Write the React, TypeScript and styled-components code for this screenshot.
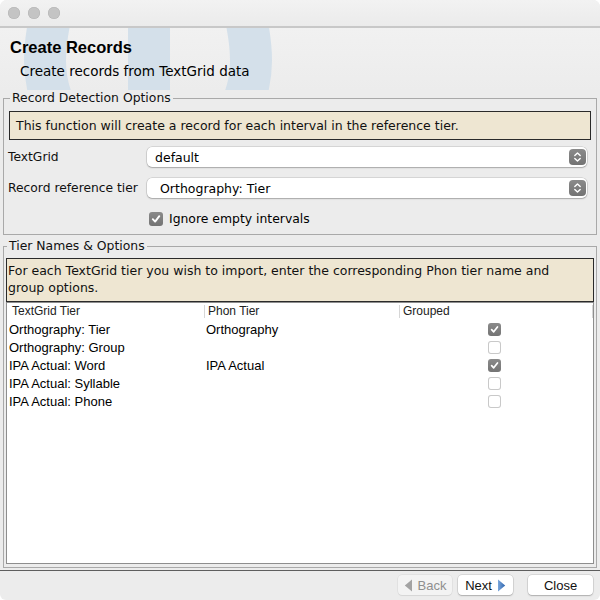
import React from "react";
import styled, { createGlobalStyle } from "styled-components";

const UI = `"DejaVu Sans", Verdana, sans-serif`;
const SANS = `"Liberation Sans", Arial, sans-serif`;

const GlobalStyle = createGlobalStyle`
  html, body { margin: 0; padding: 0; background: #ffffff; }
  body { font-family: ${UI}; color: #000; }
  * { box-sizing: border-box; }
`;

const Window = styled.div`
  width: 600px;
  height: 600px;
  border-radius: 7px 7px 6px 6px;
  overflow: hidden;
  background: #ececec;
  display: flex;
  flex-direction: column;
`;

const TitleBar = styled.div`
  height: 28px;
  flex: none;
  display: flex;
  align-items: center;
  gap: 8px;
  padding: 0 0 1px 8px;
  background: linear-gradient(#f2f2f2, #ebebeb);
  border-bottom: 2px solid #c8c8c8;
`;

const Light = styled.span`
  width: 12px;
  height: 12px;
  border-radius: 50%;
  background: #c4c4c4;
  box-shadow: inset 0 0 0 0.5px #b2b2b2;
`;

const Header = styled.div`
  position: relative;
  height: 62px;
  flex: none;
  padding: 9px 0 0 10px;
  background: linear-gradient(#f1f1f1, #ececec);
  overflow: hidden;
`;

const Watermark = styled.svg`
  position: absolute;
  left: 0;
  top: 0;
  pointer-events: none;
`;

const Title = styled.div`
  position: relative;
  font-family: ${SANS};
  font-size: 16.5px;
  line-height: 20px;
  font-weight: bold;
`;

const Subtitle = styled.div`
  position: relative;
  font-size: 13.5px;
  line-height: 18px;
  margin: 5px 0 0 10px;
`;

const Body = styled.div`
  flex: 1;
  display: flex;
  flex-direction: column;
  padding: 0 3px 2px 3px;
  min-height: 0;
`;

const Group = styled.fieldset<{ $grow?: boolean }>`
  margin: 0;
  border: 1px solid #a9a9a9;
  padding: 0 ${(p) => (p.$grow ? "2px 3px 2px" : "5px 8px 5px")};
  min-width: 0;
  ${(p) => (p.$grow ? "flex: 1; display: flex; flex-direction: column; margin-top: 3px;" : "")}
`;

const Legend = styled.legend`
  font-size: 12.4px;
  line-height: 16px;
  padding: 0 2px;
  margin-left: 1px;
  color: #111;
`;

const Info = styled.div<{ $tall?: boolean }>`
  background: #eee6d2;
  border: 1px solid #2a2a2a;
  font-size: 12.5px;
  line-height: ${(p) => (p.$tall ? "17px" : "27px")};
  padding: ${(p) => (p.$tall ? "3px 4px 5px 1px" : "0 6px")};
  margin-top: ${(p) => (p.$tall ? "4px" : "5px")};
  color: #111;
`;

const FormGrid = styled.div`
  display: grid;
  grid-template-columns: 138px 1fr;
  row-gap: 11px;
  align-items: center;
  margin: 7px 4px 0 0;
`;

const Label = styled.div`
  font-size: 12.3px;
  margin-left: -1px;
  color: #111;
  white-space: nowrap;
`;

const Combo = styled.div<{ $indent: number }>`
  height: 20px;
  background: #fff;
  border-radius: 5px;
  box-shadow: 0 0 0 0.5px rgba(0, 0, 0, 0.18), 0 1px 1.5px rgba(0, 0, 0, 0.22);
  display: flex;
  align-items: center;
  justify-content: space-between;
  padding: 0 1px 0 ${(p) => p.$indent}px;
  font-size: 12.5px;
`;

const Stepper = styled.span`
  width: 17px;
  height: 16px;
  border-radius: 4px;
  background: linear-gradient(#8a8a8a, #737373);
  display: flex;
  align-items: center;
  justify-content: center;
`;

const CheckRow = styled.label`
  grid-column: 2;
  display: flex;
  align-items: center;
  gap: 6px;
  margin: 2px 0 0 2px;
  font-size: 12.4px;
`;

const Box = styled.span<{ $checked: boolean; $size: number }>`
  width: ${(p) => p.$size}px;
  height: ${(p) => p.$size}px;
  border-radius: 3px;
  flex: none;
  display: inline-flex;
  align-items: center;
  justify-content: center;
  background: ${(p) => (p.$checked ? "linear-gradient(#8a8a8a, #747474)" : "#fff")};
  box-shadow: ${(p) => (p.$checked ? "none" : "inset 0 0 0 1px #c9c9c9")};
`;

const Table = styled.div`
  flex: 1;
  background: #fff;
  border: 1px solid #8e8e8e;
  display: flex;
  flex-direction: column;
  font-family: ${SANS};
`;

const HeadRow = styled.div`
  display: grid;
  grid-template-columns: 197px 195px 193px 1fr;
  height: 17px;
  align-items: center;
  font-size: 12px;
  color: #222;
`;

const HeadCell = styled.div<{ $first?: boolean }>`
  height: 13px;
  line-height: 13px;
  padding-left: ${(p) => (p.$first ? "5px" : "3px")};
  border-left: ${(p) => (p.$first ? "none" : "1px solid #d6d6d6")};
`;

const Row = styled.div`
  display: grid;
  grid-template-columns: 197px 195px 193px;
  height: 18px;
  align-items: center;
  font-size: 13px;
`;

const Cell = styled.div`
  padding-left: 2px;
  white-space: nowrap;
`;

const CheckCell = styled.div`
  display: flex;
  justify-content: center;
  padding-right: 3px;
`;

const BottomBar = styled.div`
  height: 30px;
  flex: none;
  border-top: 1px solid #5e5e5e;
  display: flex;
  align-items: center;
  justify-content: flex-end;
  padding: 0 7px 1px 0;
  gap: 6px;
`;

const Button = styled.button<{ $disabled?: boolean; $w: number }>`
  width: ${(p) => p.$w}px;
  height: 20px;
  border: none;
  border-radius: 4px;
  background: ${(p) => (p.$disabled ? "#f3f3f3" : "#fff")};
  box-shadow: ${(p) =>
    p.$disabled
      ? "0 0 0 0.5px rgba(0,0,0,0.08), 0 1px 1px rgba(0,0,0,0.06)"
      : "0 0 0 0.5px rgba(0,0,0,0.16), 0 1px 1.5px rgba(0,0,0,0.2)"};
  font-family: ${SANS};
  font-size: 13px;
  color: ${(p) => (p.$disabled ? "#8f8f8f" : "#111")};
  display: flex;
  align-items: center;
  justify-content: center;
  gap: 5px;
  padding: 0;
`;

const Spacer = styled.span`
  width: 3px;
`;

const Check: React.FC<{ size: number }> = ({ size }) => (
  <svg width={size - 4} height={size - 4} viewBox="0 0 10 10">
    <path d="M1.8 5.2 L4.1 7.6 L8.3 2.2" fill="none" stroke="#fff" strokeWidth="1.9" strokeLinecap="round" strokeLinejoin="round" />
  </svg>
);

const CheckBox: React.FC<{ checked: boolean; size: number }> = ({ checked, size }) => (
  <Box $checked={checked} $size={size}>{checked && <Check size={size} />}</Box>
);

const UpDown = () => (
  <svg width="9" height="12" viewBox="0 0 9 12">
    <path d="M1.8 4.6 L4.5 1.9 L7.2 4.6 M1.8 7.4 L4.5 10.1 L7.2 7.4" fill="none" stroke="#fff" strokeWidth="1.4" strokeLinecap="round" strokeLinejoin="round" />
  </svg>
);

const rows: { tg: string; phon: string; grouped: boolean }[] = [
  { tg: "Orthography: Tier", phon: "Orthography", grouped: true },
  { tg: "Orthography: Group", phon: "", grouped: false },
  { tg: "IPA Actual: Word", phon: "IPA Actual", grouped: true },
  { tg: "IPA Actual: Syllable", phon: "", grouped: false },
  { tg: "IPA Actual: Phone", phon: "", grouped: false },
];

export default function App() {
  return (
    <>
      <GlobalStyle />
      <Window>
        <TitleBar>
          <Light />
          <Light />
          <Light />
        </TitleBar>
        <Header>
          <Watermark width="320" height="62" viewBox="0 0 320 62">
            <path d="M50 -10 C 44 20, 42 45, 52 72" fill="none" stroke="#d4e0ea" strokeWidth="42" />
            <rect x="128" y="0" width="42" height="62" fill="#d4e0ea" />
            <path d="M246 -10 C 252 20, 254 45, 244 72" fill="none" stroke="#d4e0ea" strokeWidth="42" />
          </Watermark>
          <Title>Create Records</Title>
          <Subtitle>Create records from TextGrid data</Subtitle>
        </Header>
        <Body>
          <Group>
            <Legend>Record Detection Options</Legend>
            <Info>This function will create a record for each interval in the reference tier.</Info>
            <FormGrid>
              <Label>TextGrid</Label>
              <Combo $indent={8}>
                <span>default</span>
                <Stepper><UpDown /></Stepper>
              </Combo>
              <Label>Record reference tier</Label>
              <Combo $indent={13}>
                <span>Orthography: Tier</span>
                <Stepper><UpDown /></Stepper>
              </Combo>
              <CheckRow>
                <CheckBox checked size={14} />
                Ignore empty intervals
              </CheckRow>
            </FormGrid>
          </Group>
          <Group $grow>
            <Legend>Tier Names &amp; Options</Legend>
            <Info $tall>
              For each TextGrid tier you wish to import, enter the corresponding Phon tier name and
              <br />
              group options.
            </Info>
            <Table>
              <HeadRow>
                <HeadCell $first>TextGrid Tier</HeadCell>
                <HeadCell>Phon Tier</HeadCell>
                <HeadCell>Grouped</HeadCell>
                <HeadCell />
              </HeadRow>
              {rows.map((r) => (
                <Row key={r.tg}>
                  <Cell>{r.tg}</Cell>
                  <Cell>{r.phon}</Cell>
                  <CheckCell>
                    <CheckBox checked={r.grouped} size={13} />
                  </CheckCell>
                </Row>
              ))}
            </Table>
          </Group>
        </Body>
        <BottomBar>
          <Button $disabled $w={54}>
            <svg width="9" height="13" viewBox="0 0 9 13">
              <path d="M8 0.5 L8 12.5 L0.8 6.5 Z" fill="#a3a3a3" />
            </svg>
            Back
          </Button>
          <Button $w={55}>
            Next
            <svg width="9" height="13" viewBox="0 0 9 13">
              <defs>
                <linearGradient id="nx" x1="0" y1="0" x2="1" y2="0">
                  <stop offset="0" stopColor="#7aa7dc" />
                  <stop offset="1" stopColor="#2f64ad" />
                </linearGradient>
              </defs>
              <path d="M1 0.5 L1 12.5 L8.2 6.5 Z" fill="url(#nx)" />
            </svg>
          </Button>
          <Spacer />
          <Button $w={65}>Close</Button>
        </BottomBar>
      </Window>
    </>
  );
}
